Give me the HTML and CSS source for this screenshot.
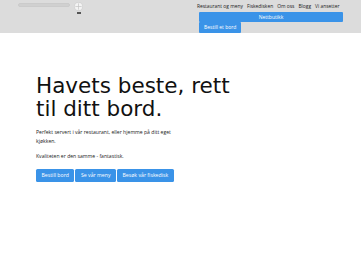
FILE: index.html
```html
<!DOCTYPE html>
<html lang="no">

<head>
    <meta charset="UTF-8">
    <meta name="viewport" content="width=device-width, initial-scale=1.0">
    <title>Havets beste</title>
    <link rel="stylesheet" href="styles.css">
</head>

<body>
    <header class="topbar">
        <div class="topbar-left">
            <div class="searchbar"></div>
            <div class="lang">
                <svg width="9" height="9" viewBox="0 0 10 10">
                    <circle cx="5" cy="5" r="4.5" fill="#f4f4f4" stroke="#c8c8c8" stroke-width="0.6" />
                    <path d="M5 1.5 V8.5 M1.5 5 H8.5" stroke="#c4c4c4" stroke-width="0.8" />
                </svg>
                <span class="lang-caret"></span>
            </div>
        </div>
        <nav class="topnav">
            <ul class="navlinks">
                <li>Restaurant og meny</li>
                <li>Fiskedisken</li>
                <li>Om oss</li>
                <li>Blogg</li>
                <li>Vi ansetter</li>
            </ul>
            <a class="shop" href="#">Nettbutikk</a>
            <a class="book" href="#">Bestill et bord</a>
        </nav>
    </header>

    <section class="hero">
        <h1>Havets beste, rett<br>til ditt bord.</h1>
        <p>Perfekt servert i vår restaurant, eller hjemme på ditt eget kjøkken.</p>
        <p>Kvaliteten er den samme - fantastisk.</p>
        <div class="actions">
            <a class="btn" href="#">Bestill bord</a>
            <a class="btn" href="#">Se vår meny</a>
            <a class="btn" href="#">Besøk vår fiskedisk</a>
        </div>
    </section>
</body>

</html>
```

FILE: styles.css
```css
body {
    margin: 0;
    font-family: "Open Sans", "DejaVu Sans", sans-serif;
    background-color: #ffffff;
    color: #1a1a1a;
}

a {
    text-decoration: none;
}

.topbar {
    display: flex;
    justify-content: space-between;
    height: 33px;
    background-color: #dcdcdc;
    padding-left: 18px;
    padding-right: 18px;
}

.topbar-left {
    display: flex;
    gap: 4px;
    padding-top: 2px;
}

.searchbar {
    width: 50px;
    height: 2px;
    margin-top: 1px;
    background-color: #d0d0d0;
    border: 0.5px solid #cbcbcb;
    border-radius: 2px;
}

.lang {
    display: flex;
    flex-direction: column;
    align-items: center;
    gap: 1px;
}

.lang-caret {
    width: 4px;
    height: 2px;
    background-color: #555;
}

.topnav {
    display: flex;
    flex-direction: column;
    align-items: flex-start;
    width: 144px;
    padding-top: 2px;
}

.navlinks {
    display: flex;
    gap: 4px;
    margin: 0 0 0 -2px;
    padding: 0;
    list-style: none;
    font-size: 4.9px;
    line-height: 8px;
    color: #222;
    white-space: nowrap;
}

.shop {
    display: block;
    align-self: stretch;
    height: 10px;
    margin-top: 2px;
    background-color: #3a93e8;
    color: white;
    font-size: 5px;
    line-height: 10px;
    text-align: center;
    border-radius: 1px;
}

.book {
    display: block;
    height: 11px;
    padding: 0 5px;
    background-color: #3a93e8;
    color: white;
    font-size: 5px;
    line-height: 11px;
    border-radius: 1px;
}

.hero {
    padding: 41px 36px 0;
}

.hero h1 {
    margin: 0 0 8px;
    font-family: "DejaVu Sans", sans-serif;
    font-weight: normal;
    font-size: 21.5px;
    line-height: 23px;
    color: #111;
}

.hero p {
    width: 150px;
    margin: 0 0 6px;
    font-size: 5.1px;
    line-height: 9px;
    color: #222;
}

.actions {
    display: flex;
    gap: 1px;
    margin-top: 8px;
}

.btn {
    display: block;
    height: 13px;
    padding: 0 5.5px;
    background-color: #3a93e8;
    color: white;
    font-size: 5.2px;
    line-height: 13px;
    border-radius: 1.5px;
}
```
